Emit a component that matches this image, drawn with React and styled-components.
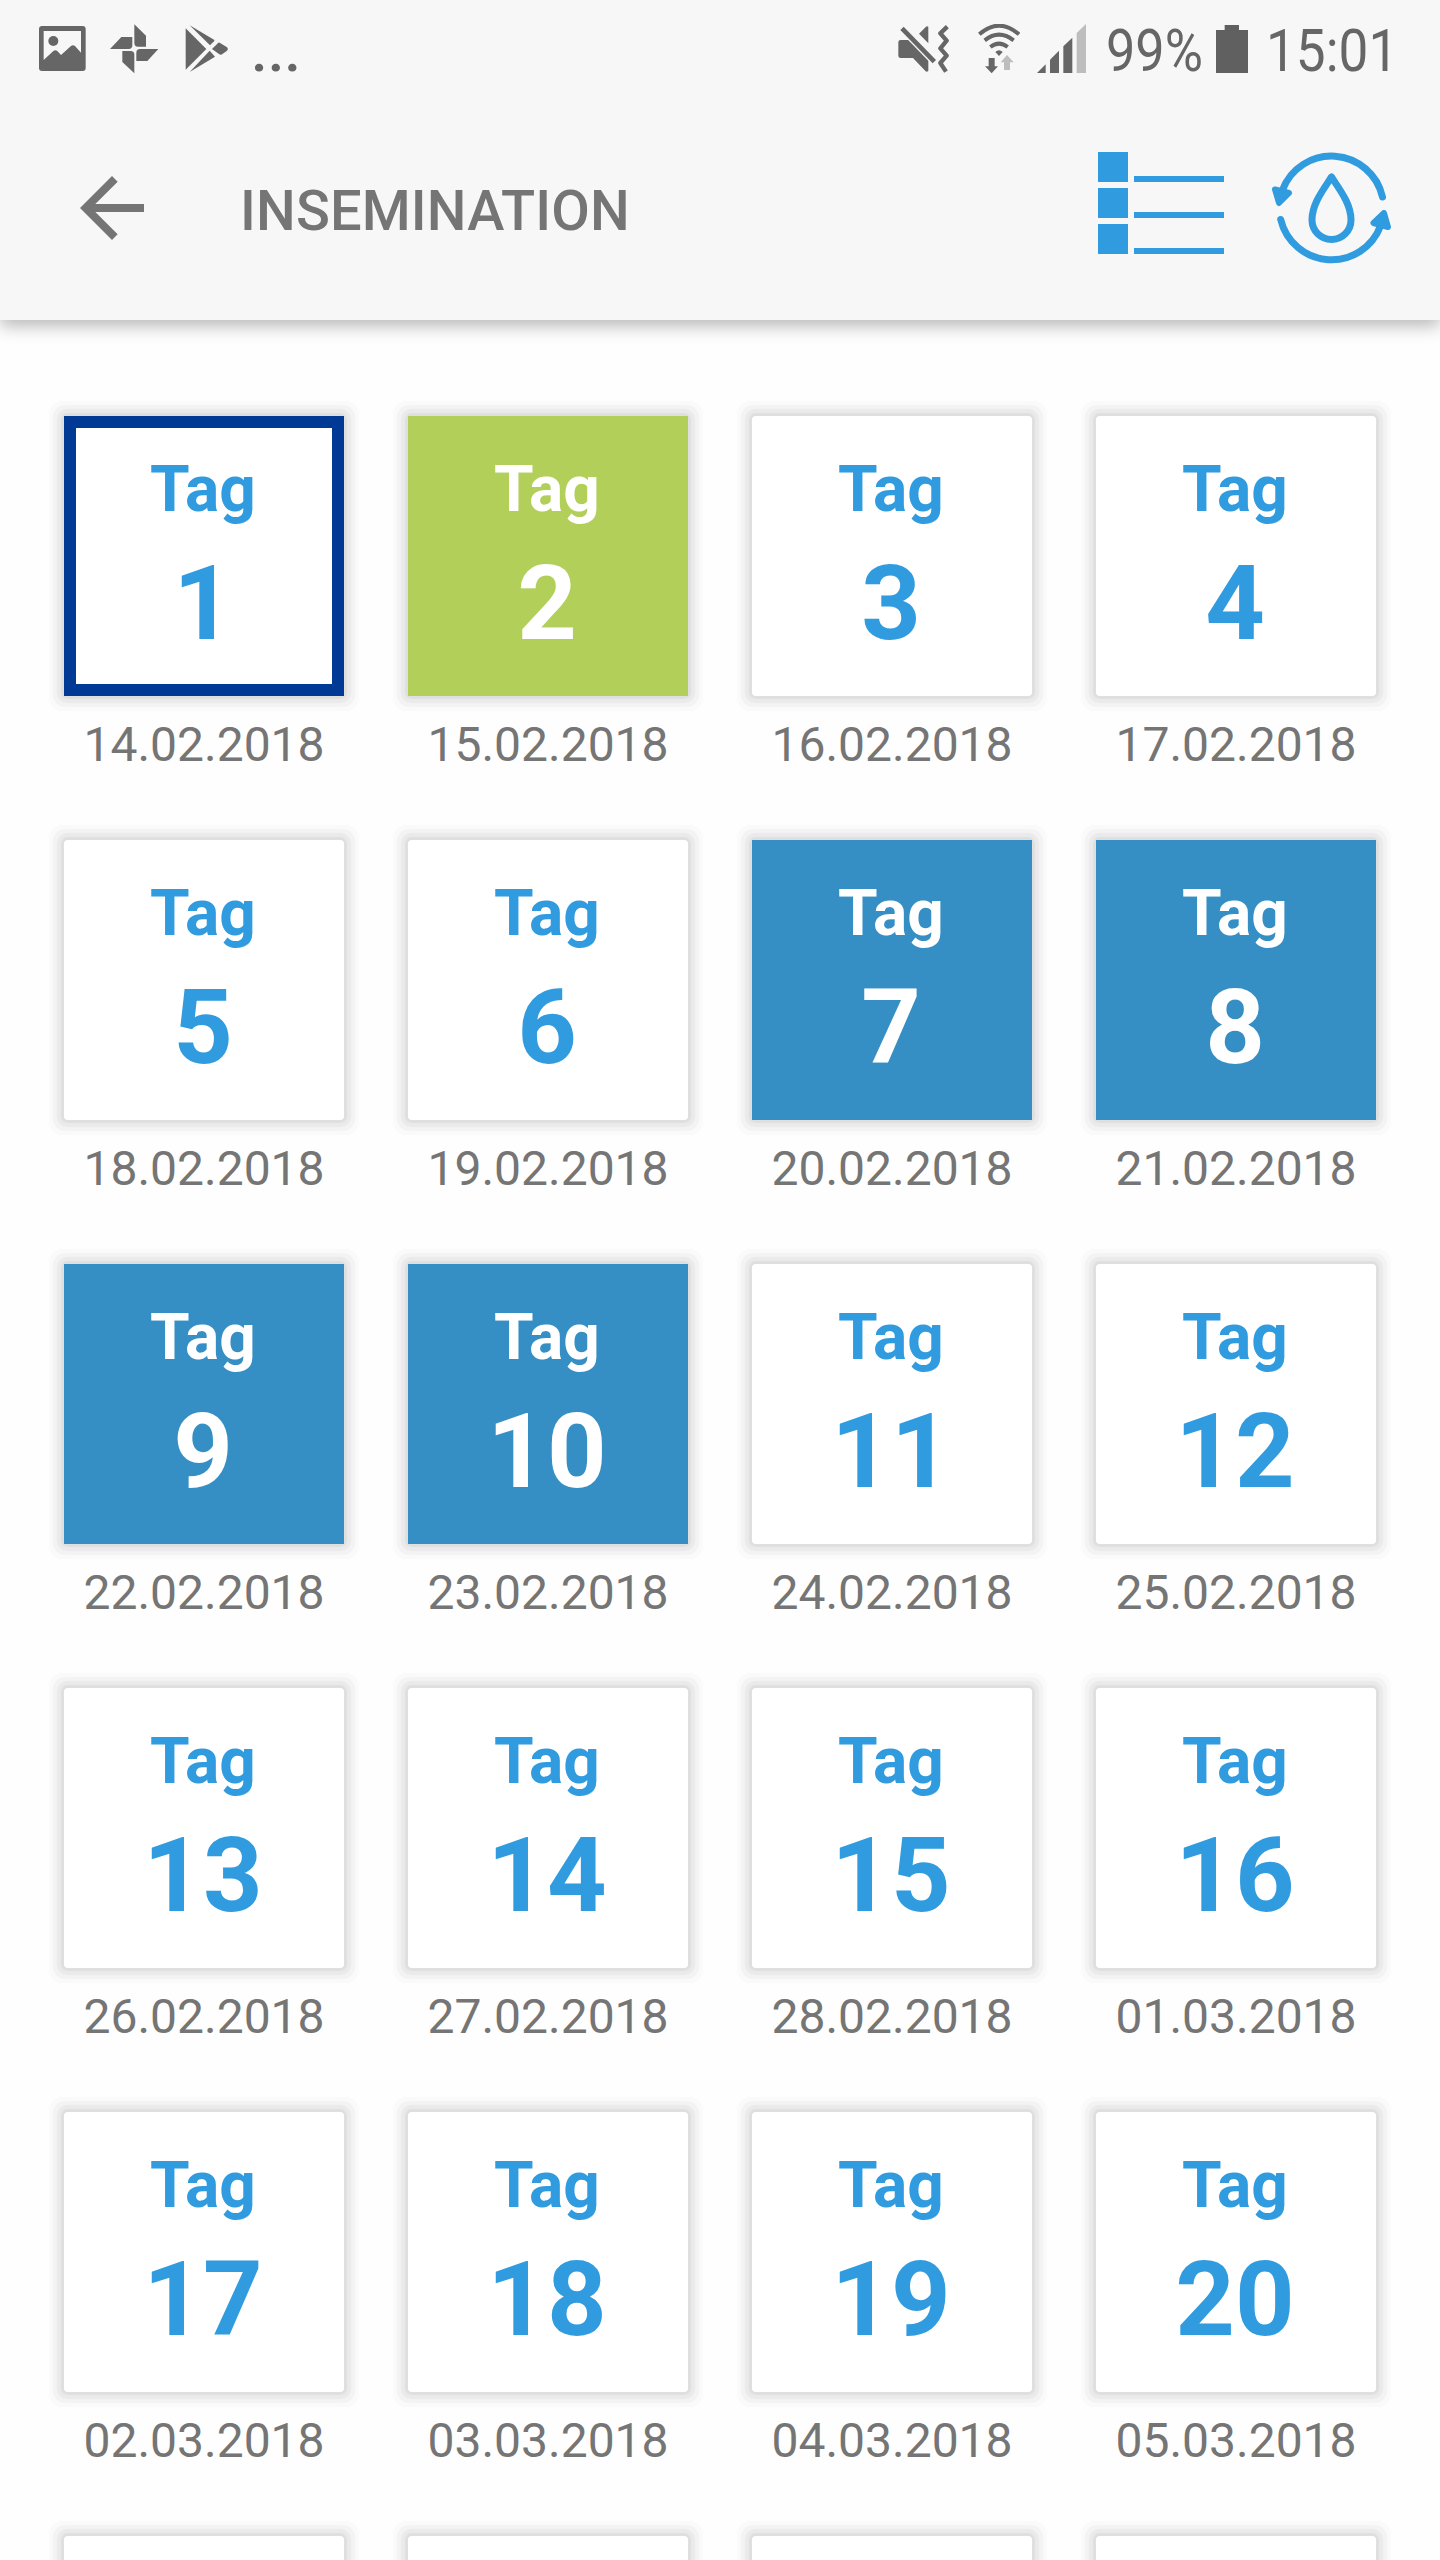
import React from 'react';
import styled, { createGlobalStyle, css } from 'styled-components';

const START = Date.UTC(2018, 1, 14)
const DAY_MS = 24 * 60 * 60 * 1000

const highlights = {
  1: 'today',
  2: 'insemination',
  7: 'control',
  8: 'control',
  9: 'control',
  10: 'control'
}

const formatDate = (time) => {
  const date = new Date(time)
  const day = String(date.getUTCDate()).padStart(2, '0')
  const month = String(date.getUTCMonth() + 1).padStart(2, '0')
  return `${day}.${month}.${date.getUTCFullYear()}`
}

const days = Array.from({ length: 20 }, (_, index) => ({
  number: index + 1,
  date: formatDate(START + index * DAY_MS),
  state: highlights[index + 1]
}))

// only the top edge of the following row is on screen
const nextRow = [21, 22, 23, 24]

const GalleryIcon = () => (
  <StatusIcon width="47" height="50" viewBox="116 72 141 150">
    <path
      fillRule="evenodd"
      d="M125 78h122q9 0 9 9v117q0 9-9 9H125q-9 0-9-9V87q0-9 9-9zM130 93v87l29-27q6-5 12 0l11 12 30-27q6-5 12 0l18 20V93z" />
    <circle cx="159" cy="123" r="15" />
  </StatusIcon>
)

const PinwheelIcon = () => (
  <StatusIcon width="49" height="50" viewBox="329 72 147 150">
    <path d="M402 73l35 34v33h-24q-11 0-11-11z" />
    <path d="M474 147l-33 36h-33v-25q0-11 11-11z" />
    <path d="M402 220l-36-34v-33h25q11 0 11 11z" />
    <path d="M329 147l34-36h33v25q0 11-11 11z" />
  </StatusIcon>
)

const PlayIcon = () => (
  <StatusIcon width="43" height="50" viewBox="556 72 129 150">
    <path d="M558 85l62 62-62 62z" />
    <path d="M570 76l73 43q3 2 0 5l-12 12z" />
    <path d="M570 216l76-46-16-18z" />
    <path d="M637 147l19-19q2-1 4 0l21 13q7 6 0 12l-16 11q-3 1-6-1z" />
  </StatusIcon>
)

const MuteIcon = () => (
  <StatusIcon width="51" height="50" viewBox="53 72 153 150">
    <path d="M144 80v50l-28-29 21-21q3-3 7 0z" />
    <path d="M61 120h27l56 56v36q-4 5-8 2l-38-40H61q-7 0-7-7v-40q0-7 7-7z" />
    <path d="M65 85l97 100" stroke="#f7f7f7" strokeWidth="22" />
    <path d="M65 85l97 100" stroke="#666" strokeWidth="14" />
    <path
      d="M201 80l-21 20 19 22-19 23 19 22-19 22 17 26"
      fill="none"
      stroke="#666"
      strokeWidth="13"
      strokeLinejoin="round" />
  </StatusIcon>
)

const WifiIcon = () => (
  <StatusIcon width="42" height="50" viewBox="295 72 126 150">
    <g fill="none" stroke="#666" strokeWidth="12">
      <path d="M299 103q59-52 119 0" />
      <path d="M315 121q43-34 87 0" />
      <path d="M332 141q26-20 52 0" />
    </g>
    <path d="M347 156q11-10 22 0l-11 12z" />
    <path d="M327 174h18v25h10l-19 21-20-21h11z" />
    <path d="M382 165l20 22h-11v23h-18v-23h-10z" fill="#bdbdbd" />
  </StatusIcon>
)

const SignalIcon = () => (
  <StatusIcon width="49" height="50" viewBox="471 72 147 150">
    <path d="M471 219l26-26v26z" />
    <path d="M510 219v-40l27-27v67z" />
    <path d="M550 219v-80l27-26v106z" />
    <path d="M590 219V99l28-27v147z" fill="#bdbdbd" />
  </StatusIcon>
)

const BatteryIcon = () => (
  <StatusIcon width="32" height="50" viewBox="228 72 96 150">
    <path d="M254 75h43v15h27v129h-96V90h26z" fill="#606060" />
  </StatusIcon>
)

const BackIcon = () => (
  <svg width="96" height="96" viewBox="0 0 24 24" fill="#757575">
    <path d="M20 11H7.83l5.59-5.59L12 4l-8 8 8 8 1.41-1.41L7.83 13H20v-2z" />
  </svg>
)

const ListIcon = () => (
  <svg width="126" height="102" viewBox="0 0 21 17" fill="#309cdf">
    <path d="M0 0h5v5H0zM0 6h5v5H0zM0 12h5v5H0z" />
    <path d="M6 4h15v1H6zM6 10h15v1H6zM6 16h15v1H6z" />
  </svg>
)

const CycleIcon = () => (
  <svg width="120" height="112" viewBox="0 0 120 112" fill="none" stroke="#309cdf">
    <g strokeWidth="7" strokeLinecap="round" strokeLinejoin="round">
      <path d="M10.5 38A52.3 52.3 0 0 1 110.500 45" />
      <path d="M8.700 67.500A52.300 52.300 0 0 0 108.500 74" />
      <path d="M59.500 25C51 38 40 52 40 68a19.500 19.500 0 0 0 39 0C79 52 68 38 59.500 25z" />
    </g>
    <g fill="#309cdf" strokeWidth="6" strokeLinejoin="round">
      <path d="M3 37.500l14 3.500-10 10z" />
      <path d="M112 61l-10.500 10 14.500 4z" />
    </g>
  </svg>
)

const DayTile = ({ number, date, state }) => (
  <Day>
    <CardFrame>
      <Card $state={state}>
        <CardLabel>Tag</CardLabel>
        <CardNumber>{number}</CardNumber>
      </Card>
    </CardFrame>
    <DateText>{date}</DateText>
  </Day>
)

export default function App() {
  return (
    <>
      <GlobalStyle />
      <Screen>
        <Header>
          <StatusBar>
            <Notifications>
              <GalleryIcon />
              <PinwheelIcon />
              <PlayIcon />
              <Dots>...</Dots>
            </Notifications>
            <System>
              <MuteIcon />
              <WifiIcon />
              <SignalIcon />
              <StatusText $width={96} $scale={0.87}>99%</StatusText>
              <BatteryIcon />
              <StatusText $width={127} $scale={0.885}>15:01</StatusText>
            </System>
          </StatusBar>
          <Toolbar>
            <BackIcon />
            <Title>INSEMINATION</Title>
            <Actions>
              <ListIcon />
              <CycleIcon />
            </Actions>
          </Toolbar>
        </Header>
        <Calendar>
          {days.map(day => <DayTile key={day.number} {...day} />)}
          {nextRow.map(number => (
            <Day key={number}>
              <CardFrame />
            </Day>
          ))}
        </Calendar>
      </Screen>
    </>
  )
}

const GlobalStyle = createGlobalStyle`
  body {
    margin: 0;
    background: #fefefe;
    font-family: Roboto, sans-serif;
  }
`
const Screen = styled.div`
  width: 1440px;
  height: 2560px;
  overflow: hidden;
`
const Header = styled.header`
  position: relative;
  height: 320px;
  background: #f7f7f7;
  box-shadow: 0 6px 16px rgba(0, 0, 0, 0.28);
`
const StatusBar = styled.div`
  display: flex;
  justify-content: space-between;
  height: 96px;
  padding: 0 47px 0 39px;
  box-sizing: border-box;
`
const Notifications = styled.div`
  display: flex;
  align-items: flex-start;

  > :nth-child(2) {
    margin-left: 24px;
  }
  > :nth-child(3) {
    margin-left: 26px;
  }
`
const System = styled.div`
  display: flex;
  align-items: flex-start;

  > :nth-child(2) {
    margin-left: 29px;
  }
  > :nth-child(3) {
    margin-left: 17px;
  }
  > :nth-child(4) {
    margin-left: 20px;
  }
  > :nth-child(5) {
    margin-left: 14px;
  }
  > :nth-child(6) {
    margin-left: 18px;
  }
`
const StatusIcon = styled.svg`
  flex: none;
  margin-top: 24px;
  fill: #666;
`
const StatusText = styled.span`
  width: ${({ $width }) => $width}px;
  margin-top: 15px;
  color: #666;
  font-size: 60px;
  line-height: 72px;
  white-space: nowrap;
  transform: scaleX(${({ $scale }) => $scale});
  transform-origin: left;
`
const Dots = styled.span`
  margin: 15px 0 0 23px;
  color: #666;
  font-size: 60px;
  font-weight: 500;
  line-height: 72px;
`
const Toolbar = styled.div`
  display: flex;
  align-items: flex-start;
  height: 224px;
  padding: 56px 48px 0 64px;
  box-sizing: border-box;

  > svg {
    margin-top: 8px;
  }
`
const Title = styled.h1`
  margin: 26px 0 0 80px;
  color: #757575;
  font-size: 56px;
  font-weight: 500;
  letter-spacing: 0.15px;
  line-height: 66px;
`
const Actions = styled.div`
  display: flex;
  gap: 48px;
  margin-left: auto;
`
const Calendar = styled.main`
  display: grid;
  grid-template-columns: repeat(4, 280px);
  grid-auto-rows: 424px;
  column-gap: 64px;
  padding: 96px 64px 0;
`
const Day = styled.div`
  display: flex;
  flex-direction: column;
  align-items: center;
`
const CardFrame = styled.div`
  width: 280px;
  height: 280px;
  border-radius: 4px;
  background: white;
  box-shadow:
    0 0 1px 3px #dfdfdf,
    0 0 1px 7px #eaeaea,
    0 0 1px 11px #f3f3f3,
    0 0 1px 15px #fafafa;
`
const cardStates = {
  today: css`
    border: 12px solid #003a94;
  `,
  insemination: css`
    background: #b2cf5a;
    color: white;
  `,
  control: css`
    background: #358fc4;
    color: white;
  `
}
const Card = styled.div`
  display: flex;
  flex-direction: column;
  align-items: center;
  justify-content: center;
  width: 100%;
  height: 100%;
  padding: 4px 2px 0 0;
  box-sizing: border-box;
  color: #309cdf;
  font-weight: 700;
  ${({ $state }) => cardStates[$state]}
`
const CardLabel = styled.span`
  font-size: 64px;
  line-height: 75px;
`
const CardNumber = styled.span`
  font-size: 104px;
  line-height: 122px;
  margin-top: 16px;
`
const DateText = styled.span`
  margin-top: 21px;
  color: #757575;
  font-size: 48px;
  line-height: 56px;
`
